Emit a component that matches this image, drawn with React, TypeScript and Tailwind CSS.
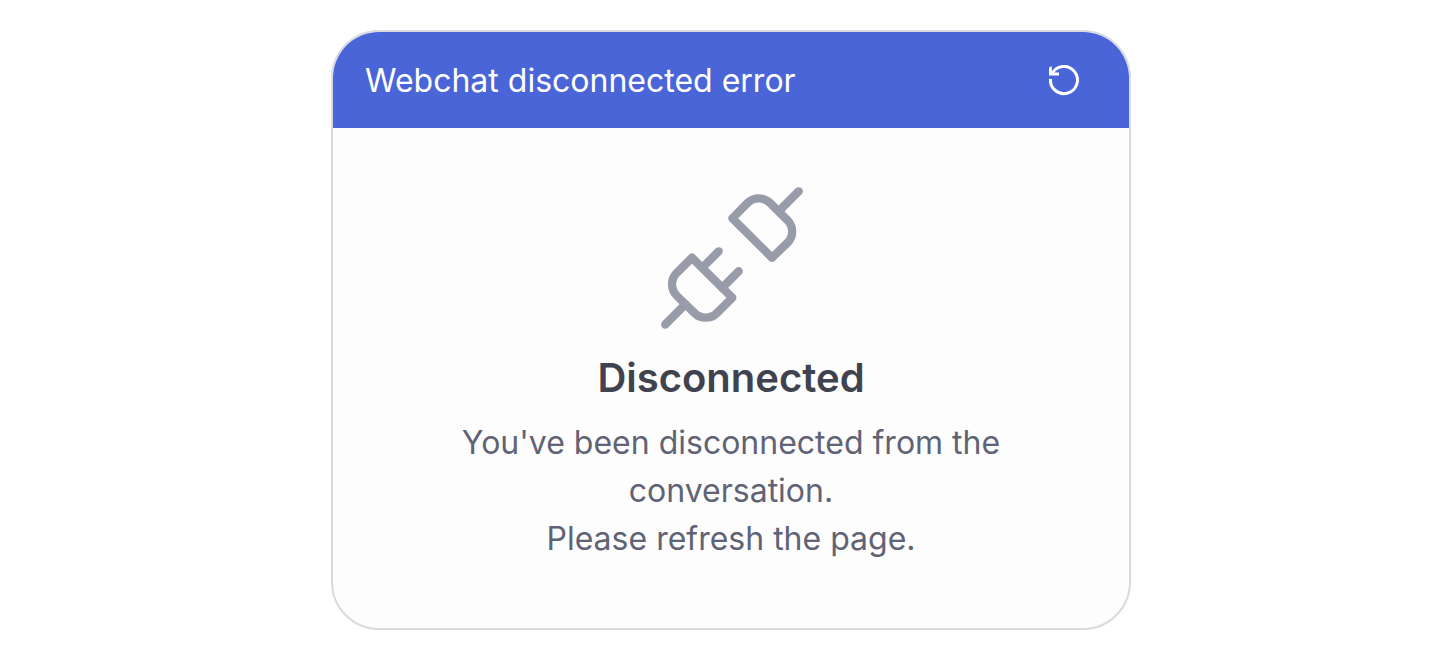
export default function App() {
  return (
    <main className="flex min-h-screen justify-center bg-white pt-[30px] pb-8 pl-[22px] font-['Inter',sans-serif]">
      <section className="flex min-h-[600px] w-full max-w-[800px] flex-col self-start overflow-hidden rounded-[48px] border-2 border-[#d9d9e0] bg-[#fdfdfd]">
        <header className="flex h-24 items-center justify-between bg-[#4a65d7] pr-12 pl-8 text-white">
          <h1 className="pt-0.5 text-[32px] leading-10">Webchat disconnected error</h1>
          <button type="button" aria-label="Restart conversation" className="flex size-9 items-center justify-center">
            <svg viewBox="0 0 36 36" className="size-9" fill="none" stroke="currentColor" strokeWidth="3">
              <path d="M5.5 16.8A13.5 13.5 0 1 0 7.2 11.4" />
              <path d="M4 5.8 6.8 4V8.6L8.2 10.6H14V13.4H4Z" fill="currentColor" stroke="none" />
            </svg>
          </button>
        </header>
        <div className="flex flex-col items-center px-24 pt-12 text-center">
          <svg viewBox="0 0 160 160" aria-hidden="true" className="size-40 text-[#989ca9]" fill="none" stroke="currentColor" strokeWidth="8.3" strokeLinecap="round" strokeLinejoin="round">
            <path d="M147.7 15.3 128 35" />
            <path d="M81.3 42.3 96.5 27a16 16 0 0 1 22.6 0L136.5 44.2a16 16 0 0 1 0 22.6L121 81.7Z" />
            <path d="M41 81.7 81.3 121.7 66 137a16 16 0 0 1-22.6 0L25.7 119.6a16 16 0 0 1 0-22.6Z" />
            <path d="M67.7 75.3 51.4 91.6M87.7 95.2 71.2 111.7M14.2 148.5 34.4 128.3" />
          </svg>
          <h2 className="mt-3 text-[40px] leading-[60px] font-semibold text-[#40424f]">Disconnected</h2>
          <p className="mt-[11px] text-[32px] leading-[48px] text-[#606375]">
            You've been disconnected from the conversation.
            <br />
            Please refresh the page.
          </p>
        </div>
      </section>
    </main>
  );
}
